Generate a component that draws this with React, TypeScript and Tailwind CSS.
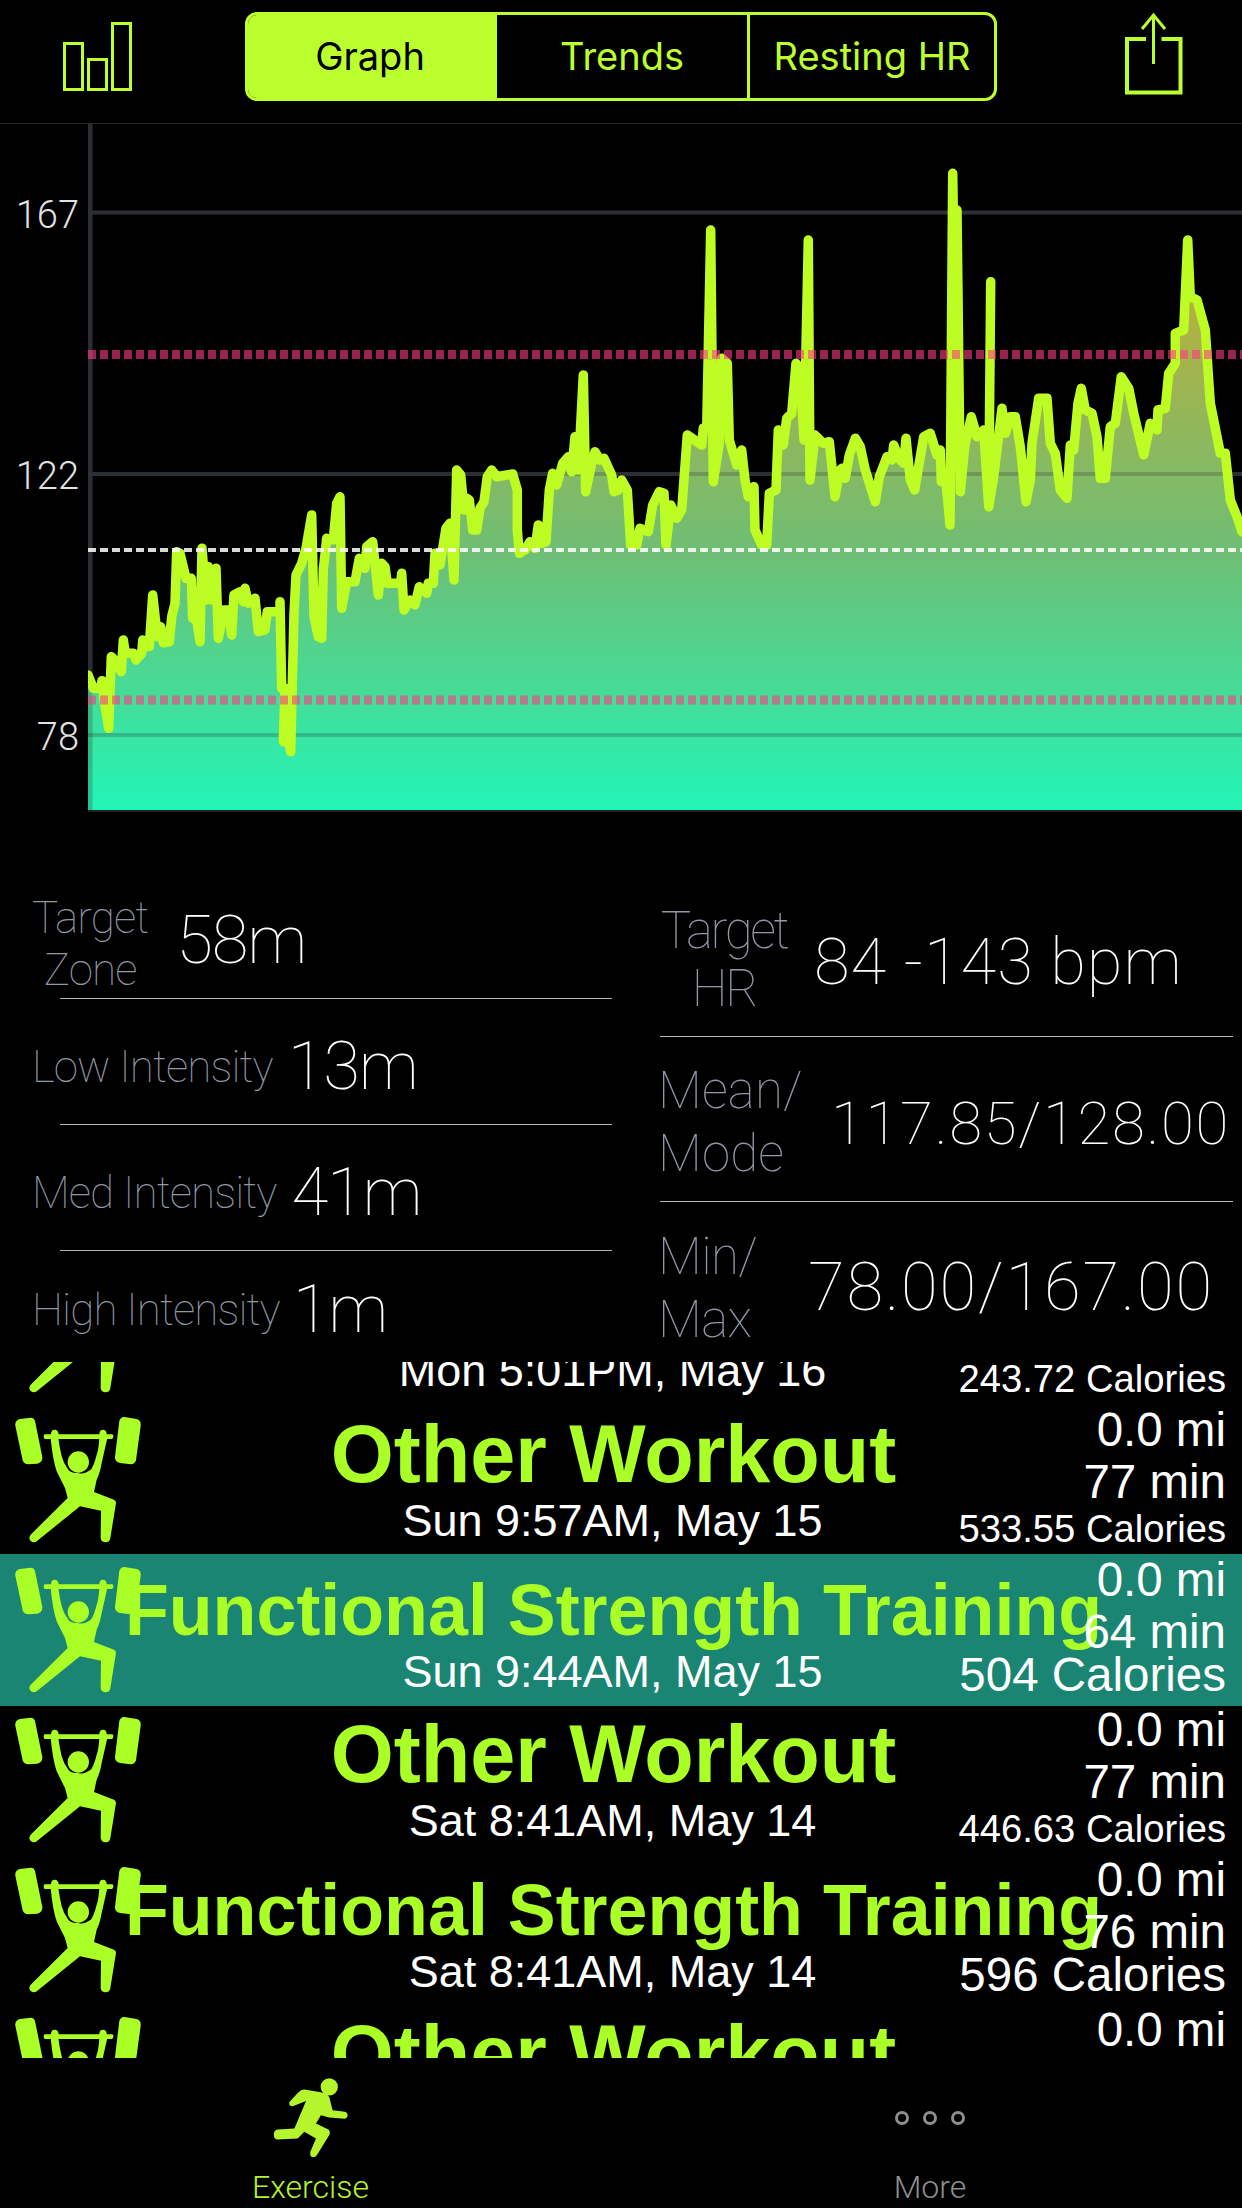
import React from "react";

const LIME = "#bcff2e";

// heart rate trace, sampled in three stretches (x0, y0, then points at 3x)
const scale = (x0: number, y0: number, pts: number[][]) =>
  pts.map(([x, y]) => [x0 + x / 3, y0 + y / 3]);

const trace = [
  ...scale(80, 440, [
    [24,705],[40,745],[62,745],[66,722],[72,780],[86,865],[94,650],[110,665],[124,695],[130,600],[136,640],[160,640],[168,660],[185,640],[188,600],[208,620],[218,465],[232,590],[242,560],[250,608],[268,605],[275,530],[285,490],[290,335],[300,340],[318,415],[334,415],[338,535],[350,540],[360,605],[366,325],[378,480],[385,380],[395,480],[408,385],[415,595],[432,510],[445,510],[455,585],[462,465],[480,455],[490,485],[495,445],[505,490],[525,475],[535,575],[555,570],[562,515],[600,515],[600,485],[605,745],[615,745],[610,905],[625,900],[632,935],[642,520],[648,405],[665,370],[678,325],[695,225],[702,530],[715,590],[725,595],[730,390],[740,295],[760,300],[770,190],[780,170],[785,505],[800,425],[825,425],[838,355],[855,385],[860,320],[878,305],[895,465],[905,370],[915,380],[922,430],[962,430],[965,400],[972,510],[990,480],[1005,495],[1018,440],[1040,460],[1045,430],[1060,430],[1065,340],[1080,375],[1098,265],[1110,250],[1122,420],
  ]),
  ...scale(440, 200, [
    [50,810],[62,825],[72,930],[80,895],[88,900],[98,990],[110,990],[120,925],[132,905],[142,830],[155,810],[170,830],[200,825],[218,822],[232,870],[232,990],[238,1060],[255,1050],[270,1025],[285,1045],[295,975],[305,1030],[318,1025],[328,870],[338,820],[350,855],[368,790],[385,770],[395,815],[405,710],[415,810],[430,525],[437,875],[455,790],[465,755],[480,780],[492,775],[515,825],[522,875],[535,870],[545,840],[562,870],[572,1035],[590,1035],[600,985],[625,995],[638,915],[658,875],[672,880],[678,1035],[692,915],[710,955],[725,930],[742,705],[785,735],[790,685],[800,685],[812,90],[820,845],[838,730],[845,475],[862,490],[868,720],[890,795],[905,750],[915,840],[925,890],[942,860],[945,990],[965,1035],[980,1035],[988,880],[1008,870],[1015,690],[1030,735],[1040,655],[1055,640],[1068,490],[1080,510],[1092,720],[1105,120],[1110,840],[1125,705],[1150,730],[1168,725],[1185,890],[1200,810],
  ]),
  ...scale(842, 160, [
    [0,925],[10,955],[22,885],[40,835],[55,860],[70,930],[100,1025],[112,950],[135,890],[150,900],[155,855],[170,895],[185,910],[192,835],[205,960],[218,990],[235,890],[245,830],[265,820],[285,885],[295,870],[298,965],[312,965],[324,1095],[332,40],[340,560],[345,150],[355,995],[368,860],[388,770],[405,830],[425,810],[440,1040],[446,365],[440,1040],[455,950],[480,745],[490,820],[505,770],[520,770],[535,860],[552,1025],[565,960],[570,850],[590,715],[615,715],[625,850],[640,880],[655,990],[675,1015],[685,855],[695,870],[708,730],[718,685],[730,750],[750,760],[765,830],[775,955],[790,955],[805,800],[820,790],[838,650],[860,685],[875,760],[905,885],[925,790],[945,810],[948,750],[970,745],[980,640],[1000,610],[1000,520],[1025,510],[1037,240],[1045,410],[1065,420],[1090,510],[1105,730],[1135,880],[1150,880],[1165,1020],[1185,1070],[1200,1115],
  ]),
];

const linePoints = trace.map(([x, y]) => `${x.toFixed(1)},${y.toFixed(1)}`).join(" ");
const areaPoints = `88,810 ${linePoints} 1242,810`;

const gridRows = [
  { y: 212.5, label: "167" },
  { y: 474, label: "122" },
  { y: 735, label: "78" },
];

function HeartRateChart() {
  return (
    <svg viewBox="0 124 1242 688" className="block h-[688px] w-full">
      <defs>
        <linearGradient id="hrFill" gradientUnits="userSpaceOnUse" x1="0" y1="300" x2="0" y2="810">
          <stop offset="0" stopColor="#b5b040" />
          <stop offset="0.49" stopColor="#6fbe74" />
          <stop offset="1" stopColor="#22f5b6" />
        </linearGradient>
        <clipPath id="plot">
          <rect x="88" y="124" width="1154" height="686" />
        </clipPath>
      </defs>
      <rect x="88" y="124" width="4.5" height="688" fill="#2b2e33" />
      <rect x="88" y="810" width="1154" height="2" fill="#1d2024" />
      {gridRows.map((row) => (
        <rect key={row.y} x="88" y={row.y - 2} width="1154" height="4" fill="#2b2e33" />
      ))}
      <polygon points={areaPoints} fill="url(#hrFill)" />
      {/* axis and grid stay faintly visible through the area */}
      <rect x="88" y="124" width="4.5" height="686" fill="#2b2e33" opacity="0.25" />
      {gridRows.map((row) => (
        <rect key={row.y} x="88" y={row.y - 2} width="1154" height="4" fill="#2b2e33" opacity="0.25" />
      ))}
      <polyline
        points={linePoints}
        fill="none"
        stroke="#bdfd24"
        strokeWidth="9.5"
        strokeLinejoin="round"
        strokeLinecap="round"
        clipPath="url(#plot)"
      />
      <line x1="88" x2="1242" y1="354.5" y2="354.5" stroke="#ff3982" strokeOpacity="0.6" strokeWidth="9" strokeDasharray="8 4" />
      <line x1="88" x2="1242" y1="700" y2="700" stroke="#ff3982" strokeOpacity="0.6" strokeWidth="9" strokeDasharray="8 4" />
      <line x1="88" x2="1242" y1="550" y2="550" stroke="#fff" strokeOpacity="0.85" strokeWidth="4" strokeDasharray="8 4" />
      {gridRows.map((row) => (
        <text key={row.label} x="79" y={row.y + 15} textAnchor="end" fill="#e2e2e2" className="font-['Roboto',sans-serif] text-[38px] font-light">
          {row.label}
        </text>
      ))}
    </svg>
  );
}

function TopBar() {
  return (
    <div className="flex h-[124px] items-start border-b border-[#2a2a2c] pt-[12px]">
      <svg viewBox="0 0 245 110" className="-mt-[12px] h-[110px] w-[245px]" fill="none" stroke={LIME} strokeWidth="3">
        <rect x="64.5" y="43.5" width="18" height="46" />
        <rect x="88.5" y="59.5" width="18" height="30" />
        <rect x="112.5" y="23.5" width="18" height="66" />
      </svg>
      <div className="flex h-[89px] w-[752px] overflow-hidden rounded-[12px] border-[3px] border-[#bcff2e] font-['Inter',sans-serif] text-[38px]">
        <div className="flex w-[249px] items-center justify-center bg-[#bcff2e] pr-[5px] text-black">Graph</div>
        <div className="flex w-[253px] items-center justify-center border-r-[3px] border-[#bcff2e] text-[#bcff2e]">Trends</div>
        <div className="flex flex-1 items-center justify-center whitespace-nowrap text-[#bcff2e]">Resting HR</div>
      </div>
      <svg viewBox="0 0 245 110" className="-mt-[12px] h-[110px] w-[245px]" fill="none" stroke={LIME} strokeWidth="3">
        <path d="M149 39h-19v53.500h53.500v-53.500h-19" strokeWidth="4" />
        <path d="M156.500 64V15M145 29l11.500-14L168 29" />
      </svg>
    </div>
  );
}

const labelLeft = "text-[44px] leading-[52px] tracking-[-0.9px] text-[#9097a5]";

function LeftStat({ label, value, rowClass, divider = true, twoLine = false }: { label: string[]; value: string; rowClass: string; divider?: boolean; twoLine?: boolean }) {
  return (
    <>
      <div className={`flex h-[125px] items-center pl-[32px] ${rowClass}`}>
        <div className={twoLine ? `${labelLeft} mt-[6px] text-center` : `${labelLeft} whitespace-nowrap`}>
          {label.map((line) => (
            <div key={line}>{line}</div>
          ))}
        </div>
        <div className="text-[67px] leading-none tracking-[-1.2px] text-white">{value}</div>
      </div>
      {divider && <div className="ml-[60px] h-px w-[552px] bg-[#b5b5b5]" />}
    </>
  );
}

function RightStat({ label, value, rowClass, labelClass, valueClass }: { label: string[]; value: string; rowClass: string; labelClass: string; valueClass: string }) {
  return (
    <div className={`flex items-center border-b border-[#b5b5b5] last:border-b-0 ${rowClass}`}>
      <div className={`shrink-0 text-[51px] text-[#9097a5] ${labelClass}`}>
        {label.map((line) => (
          <div key={line}>{line}</div>
        ))}
      </div>
      <div className={`whitespace-nowrap leading-none text-white ${valueClass}`}>{value}</div>
    </div>
  );
}

function Stats() {
  return (
    <div className="flex h-[550px] overflow-hidden font-['Roboto',sans-serif] font-thin">
      <div className="w-[660px] shrink-0 pt-[61px]">
        <LeftStat label={["Target", "Zone"]} value="58m" rowClass="gap-[28px] pt-[10px]" twoLine />
        <LeftStat label={["Low Intensity"]} value="13m" rowClass="gap-[15px] pt-[10px]" />
        <LeftStat label={["Med Intensity"]} value="41m" rowClass="gap-[15px] pt-[10px]" />
        <LeftStat label={["High Intensity"]} value="1m" rowClass="gap-[13px] pb-[8px]" divider={false} />
      </div>
      <div className="w-[573px] shrink-0 pt-[71px]">
        <RightStat
          label={["Target", "HR"]}
          value="84 -143 bpm"
          rowClass="h-[154px]"
          labelClass="w-[128px] text-center leading-[58px] tracking-[-2.4px]"
          valueClass="ml-[26px] mt-[6px] text-[65px] tracking-[1px]"
        />
        <RightStat
          label={["Mean/", "Mode"]}
          value="117.85/128.00"
          rowClass="h-[165px] pt-[6px]"
          labelClass="-ml-[2px] w-[152px] leading-[63px] tracking-[0.2px]"
          valueClass="ml-[21px] mt-[4px] text-[60px] tracking-[1.7px]"
        />
        <RightStat
          label={["Min/", "Max"]}
          value="78.00/167.00"
          rowClass="h-[165px] pt-[6px]"
          labelClass="-ml-[2px] w-[150px] leading-[63px] tracking-[-0.6px]"
          valueClass="text-[67px] tracking-[1.8px]"
        />
      </div>
    </div>
  );
}

function LifterIcon() {
  return (
    <svg viewBox="45 232 378 378" className="ml-[15px] mt-[13px] h-[126px] w-[126px] shrink-0" fill="#aaff26">
      <path d="M60 238L92 234Q102 234 105 244L127 352Q128 368 112 372L85 374Q72 374 68 362L46 258Q44 242 60 238Z" />
      <path d="M373 232L410 238Q424 242 422 258L408 362Q404 374 392 374L360 370Q344 366 345 352L358 244Q362 232 373 232Z" />
      <path d="M135 284H153Q153 270 164 270Q175 270 176 284H298Q298 270 309 270Q320 270 320 284H337Q341 284 340 292Q339 298 335 298H135Q131 298 131 291Q131 284 135 284Z" />
      <circle cx="235" cy="367" r="32" />
      <path d="M152 295Q158 360 170 395L195 445L203 475L92 585Q84 596 92 604Q102 612 112 603L240 500L303 513L302 595Q304 608 317 608Q329 608 331 595L348 490Q348 483 342 480L282 457L290 420Q300 400 305 370L322 295H298Q296 330 290 345Q280 385 270 392Q250 406 235 400Q212 400 205 390Q190 370 185 350Q178 320 175 295Z" />
    </svg>
  );
}

type Workout = {
  title: string;
  when: string;
  miles: string;
  minutes: string;
  calories: string;
  selected?: boolean;
};

const workouts: Workout[] = [
  { title: "Other Workout", when: "Mon 5:01PM, May 16", miles: "0.0 mi", minutes: "37 min", calories: "243.72 Calories" },
  { title: "Other Workout", when: "Sun 9:57AM, May 15", miles: "0.0 mi", minutes: "77 min", calories: "533.55 Calories" },
  { title: "Functional Strength Training", when: "Sun 9:44AM, May 15", miles: "0.0 mi", minutes: "64 min", calories: "504 Calories", selected: true },
  { title: "Other Workout", when: "Sat 8:41AM, May 14", miles: "0.0 mi", minutes: "77 min", calories: "446.63 Calories" },
  { title: "Functional Strength Training", when: "Sat 8:41AM, May 14", miles: "0.0 mi", minutes: "76 min", calories: "596 Calories" },
  { title: "Other Workout", when: "Sat 7:30AM, May 14", miles: "0.0 mi", minutes: "77 min", calories: "500.00 Calories" },
];

function WorkoutRow({ item }: { item: Workout }) {
  const long = item.title.length > 20;
  const decimal = item.calories.includes(".");
  return (
    <div className={`relative flex h-[150px] ${item.selected ? "bg-[#1a8572] shadow-[0_2px_0_#1a8572]" : ""}`}>
      <LifterIcon />
      {/* long titles run under the icon and the figures */}
      <div className="absolute left-0 top-[8px] flex w-[1227px] flex-col items-center">
        <div className={`h-[84px] whitespace-nowrap font-bold text-[#aaff26] ${long ? "text-[71.8px] leading-[96px]" : "text-[81px] leading-[84px]"}`}>
          {item.title}
        </div>
        <div className={`-ml-[2px] text-[45px] leading-[48px] text-white ${long ? "mt-[2px]" : "mt-px"}`}>{item.when}</div>
      </div>
      <div className="relative ml-auto flex flex-col items-end pr-[16px] text-white">
        <div className="text-[47.500px] leading-[52px]">{item.miles}</div>
        <div className="text-[47.500px] leading-[52px]">{item.minutes}</div>
        <div className={decimal ? "mt-px text-[38.200px] leading-[40px]" : "text-[47.500px] leading-[34px]"}>{item.calories}</div>
      </div>
    </div>
  );
}

function TabBar() {
  return (
    <div className="grid h-[150px] grid-cols-2 font-['Roboto',sans-serif] text-[32px] font-light">
      <div className="flex flex-col items-center pt-[19px] text-[#b4f52e]">
        <svg viewBox="90 50 240 250" className="h-[83px] w-[80px]" fill="#b4f52e">
          <circle cx="265" cy="80" r="26" />
          <path d="M145 125Q142 138 155 138L195 122L160 205L110 208Q98 210 98 223Q98 238 110 238L170 235L190 215L225 235L208 275Q206 290 215 292Q224 292 228 285L265 225Q270 214 262 208L225 190L240 165L265 172L312 176Q322 172 320 163Q318 155 312 155L275 150L265 110Q258 98 235 95L190 88Q180 88 170 98Z" />
        </svg>
        <div className="mt-[9px] leading-[36px]">Exercise</div>
      </div>
      <div className="flex flex-col items-center text-[#8e8e8e]">
        <div className="-ml-[3px] mt-[50px] flex h-[20px] items-center gap-[14px]">
          <span className="h-[14px] w-[14px] rounded-full border-[3px] border-[#8e8e8e]" />
          <span className="h-[14px] w-[14px] rounded-full border-[3px] border-[#8e8e8e]" />
          <span className="h-[14px] w-[14px] rounded-full border-[3px] border-[#8e8e8e]" />
        </div>
        <div className="-ml-[3px] mt-[41px] leading-[36px]">More</div>
      </div>
    </div>
  );
}

export default function App() {
  return (
    <div className="h-[2208px] w-[1242px] overflow-hidden bg-black font-['Liberation_Sans',sans-serif]">
      <TopBar />
      <HeartRateChart />
      <Stats />
      <div className="h-[696px] overflow-hidden">
        <div className="-mt-[108px]">
          {workouts.map((item, i) => (
            <WorkoutRow key={i} item={item} />
          ))}
        </div>
      </div>
      <TabBar />
    </div>
  );
}
